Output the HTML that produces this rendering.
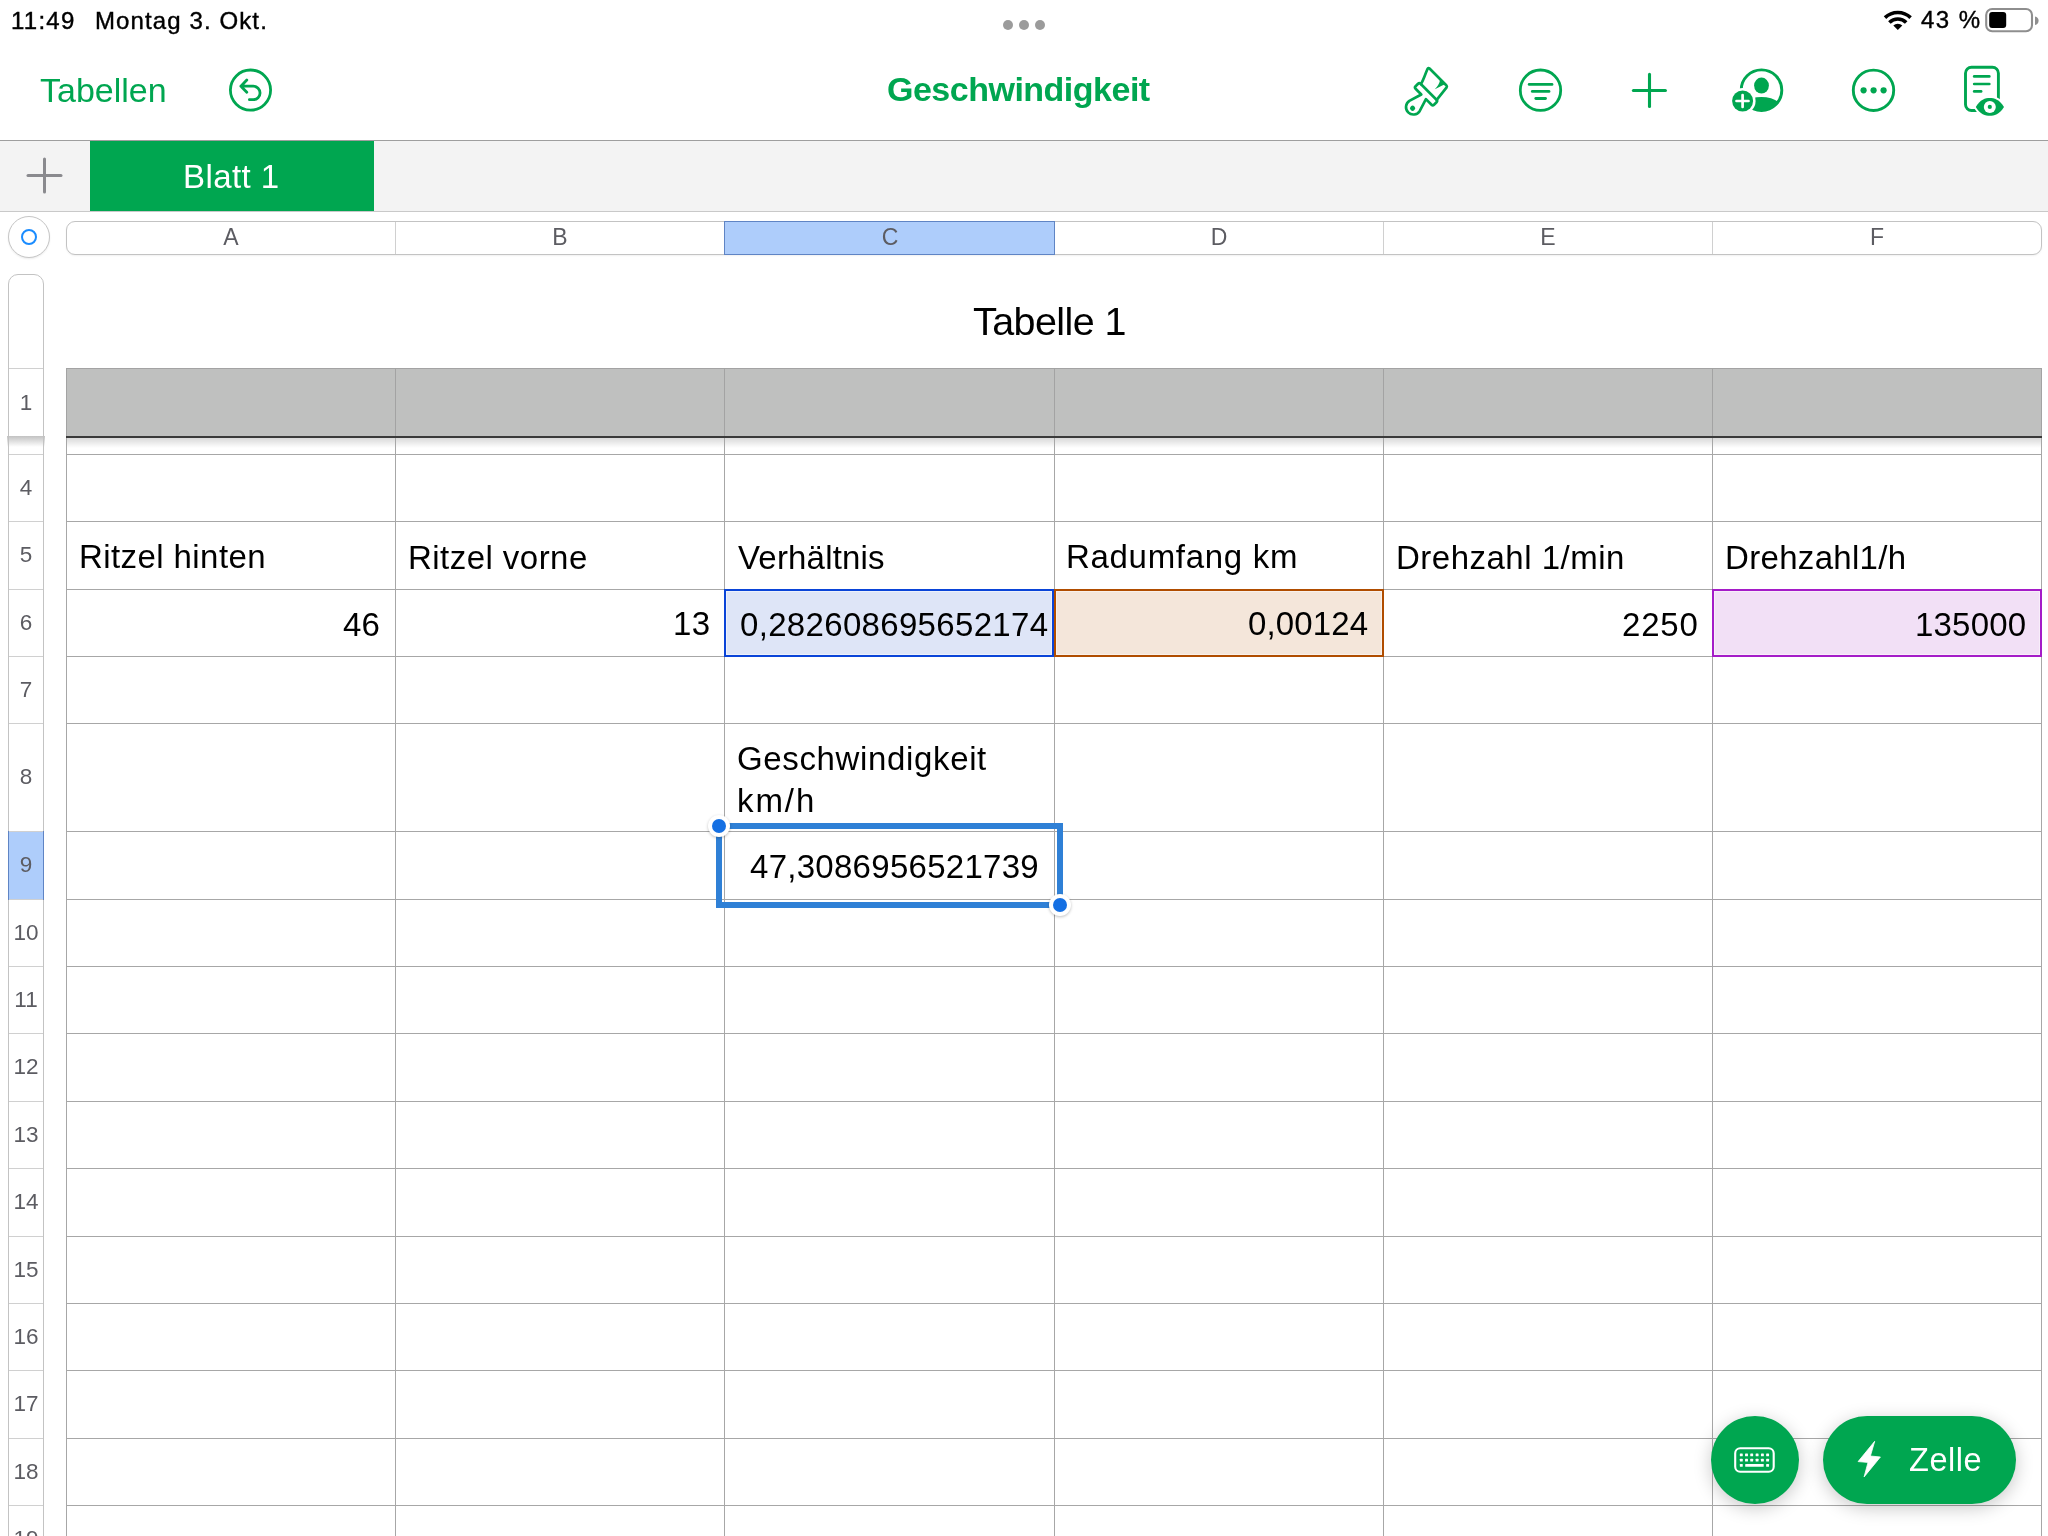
<!DOCTYPE html>
<html><head><meta charset="utf-8">
<style>
*{margin:0;padding:0;box-sizing:border-box}
html,body{width:2048px;height:1536px;overflow:hidden;background:#fff;font-family:"Liberation Sans",sans-serif}
body{position:relative}
.a{position:absolute}
.t{position:absolute;white-space:nowrap;line-height:1;will-change:transform}
svg{position:absolute;left:0;top:0;overflow:visible}
</style></head><body>
<div class="t" style="left:11.0px;top:8.5px;font-size:24px;color:#000;font-weight:400;-webkit-text-stroke:0.4px #000;letter-spacing:1.250px">11:49</div>
<div class="t" style="left:94.9px;top:8.5px;font-size:24px;color:#000;font-weight:400;-webkit-text-stroke:0.4px #000;letter-spacing:1.108px">Montag 3. Okt.</div>
<div class="a" style="left:1003px;top:20px;width:10px;height:10px;border-radius:5px;background:#9b9b9b"></div>
<div class="a" style="left:1019px;top:20px;width:10px;height:10px;border-radius:5px;background:#9b9b9b"></div>
<div class="a" style="left:1035px;top:20px;width:10px;height:10px;border-radius:5px;background:#9b9b9b"></div>
<div class="t" style="left:1921.0px;top:7.7px;font-size:24px;color:#000;font-weight:400;-webkit-text-stroke:0.4px #000;letter-spacing:1.467px">43 %</div>
<div class="t" style="left:39.8px;top:72.6px;font-size:34px;color:#00a650;font-weight:400;;letter-spacing:0.000px">Tabellen</div>
<div class="t" style="left:887.0px;top:72.2px;font-size:34px;color:#00a650;font-weight:700;;letter-spacing:-0.500px">Geschwindigkeit</div>
<div class="a" style="left:0;top:140px;width:2048px;height:72px;background:#f3f3f3;border-top:1px solid #9e9e9e;border-bottom:1px solid #c9c9c9"></div>
<div class="a" style="left:90px;top:141px;width:284px;height:70px;background:#00a650"></div>
<div class="t" style="left:183.4px;top:160.1px;font-size:33px;color:#fff;font-weight:400;;letter-spacing:0.433px">Blatt 1</div>
<div class="a" style="left:66px;top:221px;width:1976px;height:34px;border:1px solid #c3c3c3;border-radius:9px;background:#fff;box-shadow:0 1px 2px rgba(0,0,0,0.06)"></div>
<div class="a" style="left:724px;top:221px;width:331px;height:34px;background:#aecdfb;border:1px solid #5f84c4"></div>
<div class="t" style="left:191.0px;width:80px;text-align:center;top:226.1px;font-size:23px;color:#5c5c62">A</div>
<div class="t" style="left:520.0px;width:80px;text-align:center;top:226.1px;font-size:23px;color:#5c5c62">B</div>
<div class="t" style="left:849.5px;width:80px;text-align:center;top:226.1px;font-size:23px;color:#5c5c62">C</div>
<div class="t" style="left:1179.0px;width:80px;text-align:center;top:226.1px;font-size:23px;color:#5c5c62">D</div>
<div class="t" style="left:1508.0px;width:80px;text-align:center;top:226.1px;font-size:23px;color:#5c5c62">E</div>
<div class="t" style="left:1837.0px;width:80px;text-align:center;top:226.1px;font-size:23px;color:#5c5c62">F</div>
<div class="a" style="left:395px;top:222px;width:1px;height:32px;background:#d0d0d0"></div>
<div class="a" style="left:1383px;top:222px;width:1px;height:32px;background:#d0d0d0"></div>
<div class="a" style="left:1712px;top:222px;width:1px;height:32px;background:#d0d0d0"></div>
<div class="a" style="left:8px;top:216px;width:42px;height:42px;border-radius:21px;border:1px solid #c6c6c6;background:#fff;box-shadow:0 1px 2px rgba(0,0,0,0.08)"></div>
<div class="a" style="left:21px;top:229px;width:16px;height:16px;border-radius:8px;border:2px solid #1a8cff"></div>
<div class="a" style="left:8px;top:274px;width:36px;height:1300px;border:1px solid #c3c3c3;border-radius:10px 10px 0 0;background:#fff"></div>
<div class="a" style="left:8px;top:831px;width:36px;height:69px;background:#aecdfb;border:1px solid #5f84c4"></div>
<div class="a" style="left:9px;top:368px;width:34px;height:1px;background:#d0d0d0"></div>
<div class="a" style="left:9px;top:454px;width:34px;height:1px;background:#d0d0d0"></div>
<div class="a" style="left:9px;top:521px;width:34px;height:1px;background:#d0d0d0"></div>
<div class="a" style="left:9px;top:589px;width:34px;height:1px;background:#d0d0d0"></div>
<div class="a" style="left:9px;top:656px;width:34px;height:1px;background:#d0d0d0"></div>
<div class="a" style="left:9px;top:723px;width:34px;height:1px;background:#d0d0d0"></div>
<div class="a" style="left:9px;top:831px;width:34px;height:1px;background:#d0d0d0"></div>
<div class="a" style="left:9px;top:899px;width:34px;height:1px;background:#d0d0d0"></div>
<div class="a" style="left:9px;top:966px;width:34px;height:1px;background:#d0d0d0"></div>
<div class="a" style="left:9px;top:1033px;width:34px;height:1px;background:#d0d0d0"></div>
<div class="a" style="left:9px;top:1101px;width:34px;height:1px;background:#d0d0d0"></div>
<div class="a" style="left:9px;top:1168px;width:34px;height:1px;background:#d0d0d0"></div>
<div class="a" style="left:9px;top:1236px;width:34px;height:1px;background:#d0d0d0"></div>
<div class="a" style="left:9px;top:1303px;width:34px;height:1px;background:#d0d0d0"></div>
<div class="a" style="left:9px;top:1370px;width:34px;height:1px;background:#d0d0d0"></div>
<div class="a" style="left:9px;top:1438px;width:34px;height:1px;background:#d0d0d0"></div>
<div class="a" style="left:9px;top:1505px;width:34px;height:1px;background:#d0d0d0"></div>
<div class="a" style="left:7px;top:436px;width:38px;height:11px;background:linear-gradient(#c2c2c2,rgba(255,255,255,0))"></div>
<div class="t" style="left:6px;width:40px;text-align:center;top:391.8px;font-size:22.5px;color:#5c5c62">1</div>
<div class="t" style="left:6px;width:40px;text-align:center;top:476.8px;font-size:22.5px;color:#5c5c62">4</div>
<div class="t" style="left:6px;width:40px;text-align:center;top:544.3px;font-size:22.5px;color:#5c5c62">5</div>
<div class="t" style="left:6px;width:40px;text-align:center;top:611.8px;font-size:22.5px;color:#5c5c62">6</div>
<div class="t" style="left:6px;width:40px;text-align:center;top:678.8px;font-size:22.5px;color:#5c5c62">7</div>
<div class="t" style="left:6px;width:40px;text-align:center;top:766.3px;font-size:22.5px;color:#5c5c62">8</div>
<div class="t" style="left:6px;width:40px;text-align:center;top:854.3px;font-size:22.5px;color:#5c5c62">9</div>
<div class="t" style="left:6px;width:40px;text-align:center;top:921.8px;font-size:22.5px;color:#5c5c62">10</div>
<div class="t" style="left:6px;width:40px;text-align:center;top:988.8px;font-size:22.5px;color:#5c5c62">11</div>
<div class="t" style="left:6px;width:40px;text-align:center;top:1056.3px;font-size:22.5px;color:#5c5c62">12</div>
<div class="t" style="left:6px;width:40px;text-align:center;top:1123.8px;font-size:22.5px;color:#5c5c62">13</div>
<div class="t" style="left:6px;width:40px;text-align:center;top:1191.3px;font-size:22.5px;color:#5c5c62">14</div>
<div class="t" style="left:6px;width:40px;text-align:center;top:1258.8px;font-size:22.5px;color:#5c5c62">15</div>
<div class="t" style="left:6px;width:40px;text-align:center;top:1325.8px;font-size:22.5px;color:#5c5c62">16</div>
<div class="t" style="left:6px;width:40px;text-align:center;top:1393.3px;font-size:22.5px;color:#5c5c62">17</div>
<div class="t" style="left:6px;width:40px;text-align:center;top:1460.8px;font-size:22.5px;color:#5c5c62">18</div>
<div class="t" style="left:6px;width:40px;text-align:center;top:1527.8px;font-size:22.5px;color:#5c5c62">19</div>
<div class="t" style="left:973.4px;top:302.2px;font-size:39.5px;color:#000;font-weight:400;;letter-spacing:-0.575px">Tabelle 1</div>
<div class="a" style="left:66px;top:368px;width:1976px;height:69px;background:#bfc0bf;border:1px solid #a3a3a3;border-bottom:none"></div>
<div class="a" style="left:66px;top:436px;width:1976px;height:2px;background:#3a3a3a"></div>
<div class="a" style="left:67px;top:438px;width:1974px;height:10px;background:linear-gradient(rgba(0,0,0,0.15),rgba(0,0,0,0))"></div>
<div class="a" style="left:395px;top:369px;width:1px;height:67px;background:#a3a3a3"></div>
<div class="a" style="left:724px;top:369px;width:1px;height:67px;background:#a3a3a3"></div>
<div class="a" style="left:1054px;top:369px;width:1px;height:67px;background:#a3a3a3"></div>
<div class="a" style="left:1383px;top:369px;width:1px;height:67px;background:#a3a3a3"></div>
<div class="a" style="left:1712px;top:369px;width:1px;height:67px;background:#a3a3a3"></div>
<div class="a" style="left:66px;top:438px;width:1px;height:1100px;background:#a7a7a7"></div>
<div class="a" style="left:395px;top:438px;width:1px;height:1100px;background:#a7a7a7"></div>
<div class="a" style="left:724px;top:438px;width:1px;height:1100px;background:#a7a7a7"></div>
<div class="a" style="left:1054px;top:438px;width:1px;height:1100px;background:#a7a7a7"></div>
<div class="a" style="left:1383px;top:438px;width:1px;height:1100px;background:#a7a7a7"></div>
<div class="a" style="left:1712px;top:438px;width:1px;height:1100px;background:#a7a7a7"></div>
<div class="a" style="left:2041px;top:438px;width:1px;height:1100px;background:#a7a7a7"></div>
<div class="a" style="left:66px;top:454px;width:1976px;height:1px;background:#a7a7a7"></div>
<div class="a" style="left:66px;top:521px;width:1976px;height:1px;background:#a7a7a7"></div>
<div class="a" style="left:66px;top:589px;width:1976px;height:1px;background:#a7a7a7"></div>
<div class="a" style="left:66px;top:656px;width:1976px;height:1px;background:#a7a7a7"></div>
<div class="a" style="left:66px;top:723px;width:1976px;height:1px;background:#a7a7a7"></div>
<div class="a" style="left:66px;top:831px;width:1976px;height:1px;background:#a7a7a7"></div>
<div class="a" style="left:66px;top:899px;width:1976px;height:1px;background:#a7a7a7"></div>
<div class="a" style="left:66px;top:966px;width:1976px;height:1px;background:#a7a7a7"></div>
<div class="a" style="left:66px;top:1033px;width:1976px;height:1px;background:#a7a7a7"></div>
<div class="a" style="left:66px;top:1101px;width:1976px;height:1px;background:#a7a7a7"></div>
<div class="a" style="left:66px;top:1168px;width:1976px;height:1px;background:#a7a7a7"></div>
<div class="a" style="left:66px;top:1236px;width:1976px;height:1px;background:#a7a7a7"></div>
<div class="a" style="left:66px;top:1303px;width:1976px;height:1px;background:#a7a7a7"></div>
<div class="a" style="left:66px;top:1370px;width:1976px;height:1px;background:#a7a7a7"></div>
<div class="a" style="left:66px;top:1438px;width:1976px;height:1px;background:#a7a7a7"></div>
<div class="a" style="left:66px;top:1505px;width:1976px;height:1px;background:#a7a7a7"></div>
<div class="a" style="left:724px;top:589px;width:330px;height:68px;background:#dee5f7;border:2px solid #0a44d8;box-shadow:inset 0 0 0 1px rgba(255,255,255,0.45)"></div>
<div class="a" style="left:1054px;top:589px;width:330px;height:68px;background:#f4e6da;border:2px solid #b04d00;box-shadow:inset 0 0 0 1px rgba(255,255,255,0.45)"></div>
<div class="a" style="left:1712px;top:589px;width:330px;height:68px;background:#f2e0f6;border:2px solid #a51cc8;box-shadow:inset 0 0 0 1px rgba(255,255,255,0.45)"></div>
<div class="t" style="left:78.6px;top:540.4px;font-size:33px;color:#000;font-weight:400;;letter-spacing:0.417px">Ritzel hinten</div>
<div class="t" style="left:407.8px;top:540.8px;font-size:33px;color:#000;font-weight:400;;letter-spacing:0.455px">Ritzel vorne</div>
<div class="t" style="left:738.0px;top:540.6px;font-size:33px;color:#000;font-weight:400;;letter-spacing:0.178px">Verhältnis</div>
<div class="t" style="left:1066.0px;top:540.2px;font-size:33px;color:#000;font-weight:400;;letter-spacing:0.691px">Radumfang km</div>
<div class="t" style="left:1395.6px;top:540.6px;font-size:33px;color:#000;font-weight:400;;letter-spacing:0.492px">Drehzahl 1/min</div>
<div class="t" style="left:1725.2px;top:540.6px;font-size:33px;color:#000;font-weight:400;;letter-spacing:0.320px">Drehzahl1/h</div>
<div class="t" style="right:1667.5px;top:607.8px;font-size:33px;color:#000;font-weight:400;;letter-spacing:0.200px">46</div>
<div class="t" style="right:1337.3px;top:607.4px;font-size:33px;color:#000;font-weight:400;;letter-spacing:0.400px">13</div>
<div class="t" style="left:740.0px;top:607.8px;font-size:33px;color:#000;font-weight:400;;letter-spacing:0.325px">0,282608695652174</div>
<div class="t" style="right:679.5px;top:607.2px;font-size:33px;color:#000;font-weight:400;;letter-spacing:0.133px">0,00124</div>
<div class="t" style="right:349.8px;top:607.8px;font-size:33px;color:#000;font-weight:400;;letter-spacing:0.800px">2250</div>
<div class="t" style="right:21.7px;top:607.8px;font-size:33px;color:#000;font-weight:400;;letter-spacing:0.200px">135000</div>
<div class="t" style="left:737.2px;top:741.6px;font-size:33px;color:#000;font-weight:400;;letter-spacing:0.643px">Geschwindigkeit</div>
<div class="t" style="left:737.2px;top:783.5px;font-size:33px;color:#000;font-weight:400;;letter-spacing:1.933px">km/h</div>
<div class="t" style="left:749.8px;top:849.7px;font-size:33px;color:#000;font-weight:400;;letter-spacing:0.280px">47,3086956521739</div>
<div class="a" style="left:716px;top:823px;width:347px;height:85px;border:6px solid #2f80d6"></div>
<div class="a" style="left:708px;top:815px;width:22px;height:22px;border-radius:11px;background:#fff;box-shadow:0 1px 3px rgba(0,0,0,0.25)"></div>
<div class="a" style="left:712px;top:819px;width:14px;height:14px;border-radius:7px;background:#1570e3"></div>
<div class="a" style="left:1049px;top:894px;width:22px;height:22px;border-radius:11px;background:#fff;box-shadow:0 1px 3px rgba(0,0,0,0.25)"></div>
<div class="a" style="left:1053px;top:898px;width:14px;height:14px;border-radius:7px;background:#1570e3"></div>
<div class="a" style="left:1711px;top:1416px;width:88px;height:88px;border-radius:44px;background:#00a650;box-shadow:0 4px 18px rgba(0,0,0,0.22)"></div>
<div class="a" style="left:1823px;top:1416px;width:193px;height:88px;border-radius:44px;background:#00a650;box-shadow:0 4px 18px rgba(0,0,0,0.22)"></div>
<div class="t" style="left:1909.0px;top:1444.4px;font-size:32.5px;color:#fff;font-weight:400;;letter-spacing:0.550px">Zelle</div>
<svg width="2048" height="1536" viewBox="0 0 2048 1536"><g stroke="#8a8a8e" stroke-width="3" stroke-linecap="round"><line x1="28" y1="175.5" x2="61" y2="175.5"/><line x1="44.5" y1="159" x2="44.5" y2="192"/></g><g fill="none" stroke="#00a650" stroke-width="2.8" stroke-linecap="round" stroke-linejoin="round"><circle cx="250.5" cy="90.1" r="20.1"/><path d="M246.8 80 L240.9 86.2 L246.8 92.3 M240.9 86.2 L253.3 86.2 A6.75 6.75 0 0 1 253.3 99.7 L249.4 99.7"/></g><g transform="matrix(0.027621 -0.027621 0.027621 0.027621 1395 60)"><g fill="none" stroke="#00a650" stroke-width="68" stroke-linejoin="round" stroke-linecap="round"><path d="M32 893 Q32 848 -13 848 L-103 848 Q-148 848 -148 893 L-148 1100 L-480 1000 A190 190 0 1 0 -480 1372 L-148 1268 L-148 1471 Q-148 1516 -103 1516 L-13 1516 Q32 1516 32 1471 Z"/><path d="M32 905 C160 880 360 770 430 748 Q470 735 470 780 L470 1385 Q470 1425 440 1430 L32 1478"/></g><path fill="#00a650" d="M470 1140 C440 1215 340 1245 190 1250 C300 1295 420 1320 470 1350 Z"/><circle fill="#00a650" cx="-555" cy="1192" r="66"/></g><g fill="none" stroke="#00a650" stroke-width="2.8" stroke-linecap="round"><circle cx="1540.5" cy="90.2" r="20.2"/><line x1="1529.2" y1="84.4" x2="1552" y2="84.4"/><line x1="1532.3" y1="91.4" x2="1549" y2="91.4"/><line x1="1535.8" y1="98.5" x2="1545.5" y2="98.5"/></g><g stroke="#00a650" stroke-width="3.1" stroke-linecap="round"><line x1="1633.4" y1="90.5" x2="1665.4" y2="90.5"/><line x1="1649.5" y1="74.4" x2="1649.5" y2="106.4"/></g><defs><mask id="cm"><rect x="1700" y="50" width="120" height="80" fill="#fff"/><circle cx="1742.6" cy="101" r="13" fill="#000"/></mask></defs><g mask="url(#cm)"><circle cx="1761.5" cy="90.2" r="20.3" fill="none" stroke="#00a650" stroke-width="2.9"/><ellipse cx="1761.5" cy="85.6" rx="7.4" ry="8" fill="#00a650"/><clipPath id="bc"><circle cx="1761.5" cy="90.2" r="21"/></clipPath><path clip-path="url(#bc)" fill="#00a650" d="M1752 98.3 Q1761.5 95.6 1771 98.3 Q1778 100.8 1790 110 L1790 130 L1740 130 L1740 98.3 Z"/></g><circle cx="1742.6" cy="101" r="10.5" fill="#00a650"/><g stroke="#fff" stroke-width="2.7" stroke-linecap="round"><line x1="1736.5" y1="101" x2="1748.5" y2="101"/><line x1="1742.6" y1="95" x2="1742.6" y2="107"/></g><g><circle cx="1873.5" cy="90.3" r="20.2" fill="none" stroke="#00a650" stroke-width="2.9"/><circle cx="1863.6" cy="90.3" r="3.1" fill="#00a650"/><circle cx="1873.6" cy="90.3" r="3.1" fill="#00a650"/><circle cx="1883.6" cy="90.3" r="3.1" fill="#00a650"/></g><defs><mask id="dm"><rect x="1940" y="50" width="90" height="80" fill="#fff"/><path d="M1975.8 106.9 C1980 99.5 1985.5 98 1989.8 98 C1994 98 1999.6 99.5 2004 106.9 C1999.6 114.3 1994 115.8 1989.8 115.8 C1985.5 115.8 1980 114.3 1975.8 106.9 Z" fill="#000" stroke="#000" stroke-width="4"/></mask></defs><g mask="url(#dm)" fill="none" stroke="#00a650" stroke-width="2.9" stroke-linecap="round"><rect x="1965.5" y="67.3" width="32.9" height="43.2" rx="6"/><line x1="1974.2" y1="76.4" x2="1989.3" y2="76.4" stroke-width="2.7"/><line x1="1974.2" y1="84" x2="1989.3" y2="84" stroke-width="2.7"/><line x1="1974.2" y1="91.4" x2="1981.1" y2="91.4" stroke-width="2.7"/></g><path fill="#00a650" d="M1975.8 106.9 C1980 99.5 1985.5 98 1989.8 98 C1994 98 1999.6 99.5 2004 106.9 C1999.6 114.3 1994 115.8 1989.8 115.8 C1985.5 115.8 1980 114.3 1975.8 106.9 Z"/><circle cx="1989.8" cy="106.9" r="6" fill="#fff"/><circle cx="1989.8" cy="106.9" r="2.1" fill="#00a650"/><g fill="none" stroke="#000" stroke-width="3.6"><path d="M1885 17.6 A18.6 18.6 0 0 1 1910.6 17.6"/><path d="M1889.4 22.5 A12 12 0 0 1 1906.2 22.5"/></g><path fill="#000" d="M1897.8 30 L1893.3 25.6 A6.3 6.3 0 0 1 1902.3 25.6 Z"/><rect x="1986.2" y="9" width="45.8" height="22.3" rx="6" fill="none" stroke="#8e8e8e" stroke-width="2.1"/><rect x="1989.2" y="11.9" width="17" height="16" rx="3" fill="#000"/><path d="M2035 16.5 Q2038.6 17.2 2038.6 20.75 Q2038.6 24.3 2035 25 Z" fill="#8e8e8e"/><g fill="none" stroke="#fff" stroke-width="2.1"><rect x="1735.2" y="1448.3" width="38.5" height="23.5" rx="5"/></g><g fill="#fff"><rect x="1739.85" y="1453.45" width="2.9" height="2.9" rx="0.6"/><rect x="1745.05" y="1453.45" width="2.9" height="2.9" rx="0.6"/><rect x="1750.25" y="1453.45" width="2.9" height="2.9" rx="0.6"/><rect x="1755.65" y="1453.45" width="2.9" height="2.9" rx="0.6"/><rect x="1760.95" y="1453.45" width="2.9" height="2.9" rx="0.6"/><rect x="1766.15" y="1453.45" width="2.9" height="2.9" rx="0.6"/><rect x="1739.85" y="1458.65" width="2.9" height="2.9" rx="0.6"/><rect x="1745.05" y="1458.65" width="2.9" height="2.9" rx="0.6"/><rect x="1750.25" y="1458.65" width="2.9" height="2.9" rx="0.6"/><rect x="1755.65" y="1458.65" width="2.9" height="2.9" rx="0.6"/><rect x="1760.95" y="1458.65" width="2.9" height="2.9" rx="0.6"/><rect x="1766.15" y="1458.65" width="2.9" height="2.9" rx="0.6"/><rect x="1739.85" y="1463.95" width="2.9" height="2.9" rx="0.6"/><rect x="1766.15" y="1463.95" width="2.9" height="2.9" rx="0.6"/><rect x="1745.2" y="1463.95" width="18.5" height="2.9" rx="0.6"/></g><path fill="#fff" stroke="#fff" stroke-width="0.8" stroke-linejoin="round" d="M1874.7 1441.3 L1870.4 1456 L1880.4 1457 L1864.1 1476.9 L1868 1462.4 L1858.1 1461.6 Z"/></svg>
</body></html>
